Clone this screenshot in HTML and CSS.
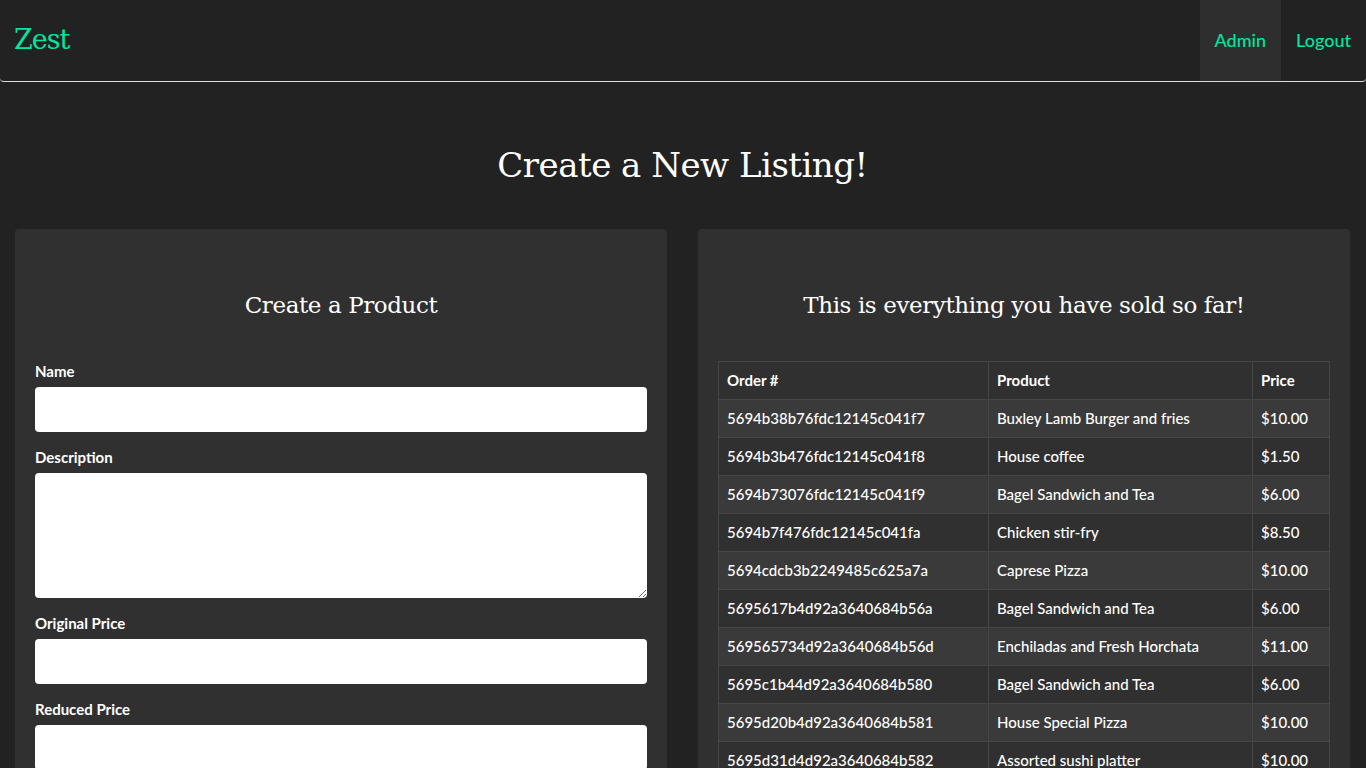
FILE: index.html
```html
<!DOCTYPE html>
<html>
<head>
<meta charset="utf-8">
<link rel="stylesheet" href="styles.css">
</head>
<body>
<nav class="navbar">
  <a class="brand" href="#">Zest</a>
  <ul class="nav">
    <li class="active"><a href="#">Admin</a></li>
    <li><a href="#">Logout</a></li>
  </ul>
</nav>
<main class="container">
  <h1 class="page-title">Create a New Listing!</h1>
  <div class="row">
    <section class="panel">
      <h3 class="panel-title">Create a Product</h3>
      <form class="form">
        <div class="form-group">
          <label>Name</label>
          <input type="text" class="input">
        </div>
        <div class="form-group">
          <label>Description</label>
          <textarea class="input textarea"></textarea>
        </div>
        <div class="form-group">
          <label>Original Price</label>
          <input type="text" class="input">
        </div>
        <div class="form-group">
          <label>Reduced Price</label>
          <input type="text" class="input">
        </div>
      </form>
    </section>
    <section class="panel">
      <h3 class="panel-title">This is everything you have sold so far!</h3>
      <table class="table">
        <colgroup><col class="c1"><col class="c2"><col class="c3"></colgroup>
        <thead>
          <tr><th>Order #</th><th>Product</th><th>Price</th></tr>
        </thead>
        <tbody>
          <tr><td>5694b38b76fdc12145c041f7</td><td>Buxley Lamb Burger and fries</td><td>$10.00</td></tr>
          <tr><td>5694b3b476fdc12145c041f8</td><td>House coffee</td><td>$1.50</td></tr>
          <tr><td>5694b73076fdc12145c041f9</td><td>Bagel Sandwich and Tea</td><td>$6.00</td></tr>
          <tr><td>5694b7f476fdc12145c041fa</td><td>Chicken stir-fry</td><td>$8.50</td></tr>
          <tr><td>5694cdcb3b2249485c625a7a</td><td>Caprese Pizza</td><td>$10.00</td></tr>
          <tr><td>5695617b4d92a3640684b56a</td><td>Bagel Sandwich and Tea</td><td>$6.00</td></tr>
          <tr><td>569565734d92a3640684b56d</td><td>Enchiladas and Fresh Horchata</td><td>$11.00</td></tr>
          <tr><td>5695c1b44d92a3640684b580</td><td>Bagel Sandwich and Tea</td><td>$6.00</td></tr>
          <tr><td>5695d20b4d92a3640684b581</td><td>House Special Pizza</td><td>$10.00</td></tr>
          <tr><td>5695d31d4d92a3640684b582</td><td>Assorted sushi platter</td><td>$10.00</td></tr>
        </tbody>
      </table>
    </section>
  </div>
</main>
</body>
</html>
```

FILE: styles.css
```css
* { box-sizing: border-box; }
html, body { margin: 0; padding: 0; }
body {
  background: #222222;
  color: #ffffff;
  font-family: Lato, "Liberation Sans", sans-serif;
  font-size: 15px;
  line-height: 1.42857;
}
.navbar {
  height: 82px;
  display: flex;
  justify-content: space-between;
  align-items: stretch;
  background: #222222;
  border-bottom: 1px solid #dddddd;
  border-radius: 0 0 4px 4px;
}
.brand {
  font-family: "DejaVu Serif", Georgia, serif;
  color: #00e6a0;
  text-decoration: none;
  font-size: 27px;
  letter-spacing: -1px;
  padding: 0 14px;
  display: flex;
  align-items: center;
}
.nav {
  list-style: none;
  margin: 0;
  padding: 0;
  display: flex;
}
.nav li { display: flex; }
.nav a {
  display: flex;
  align-items: center;
  padding: 1px 15px 0;
  color: #00e6a0;
  text-decoration: none;
  font-size: 18px;
  font-weight: 500;
}
.nav li.active a { background: #2e2e2e; }
.container { padding: 0 16px 0 15px; }
.page-title {
  font-family: "DejaVu Serif", Georgia, serif;
  font-weight: normal;
  font-size: 34px;
  letter-spacing: -0.5px;
  text-align: center;
  margin: 65px 0 45px;
  line-height: 1.1;
}
.row {
  display: grid;
  grid-template-columns: 1fr 1fr;
  gap: 31px;
}
.panel {
  background: #303030;
  border-radius: 4px;
  padding: 64px 20px 20px;
  min-height: 560px;
}
.panel-title {
  font-family: "DejaVu Serif", Georgia, serif;
  font-weight: normal;
  font-size: 23px;
  letter-spacing: -0.4px;
  text-align: center;
  margin: 0 0 42px;
  line-height: 1.1;
}
.form-group { margin-bottom: 15px; }
.form-group label {
  display: block;
  font-weight: bold;
  font-size: 15px;
  margin-bottom: 5px;
  line-height: 21px;
}
.input {
  display: block;
  width: 100%;
  height: 45px;
  border: none;
  border-radius: 4px;
  background: #ffffff;
  font-family: inherit;
  font-size: 15px;
  padding: 10px 15px;
}
.textarea { height: 125px; resize: vertical; }
.table {
  width: 100%;
  border-collapse: collapse;
  table-layout: fixed;
}
.c1 { width: 270px; }
.c2 { width: 264px; }
.table th, .table td {
  border: 1px solid #464545;
  padding: 8px;
  height: 38px;
  text-align: left;
  line-height: 21px;
  white-space: nowrap;
  overflow: hidden;
  font-weight: 500;
}
.table th { font-weight: bold; }
.table tbody tr:nth-child(odd) { background: #3a3a3a; }
```
